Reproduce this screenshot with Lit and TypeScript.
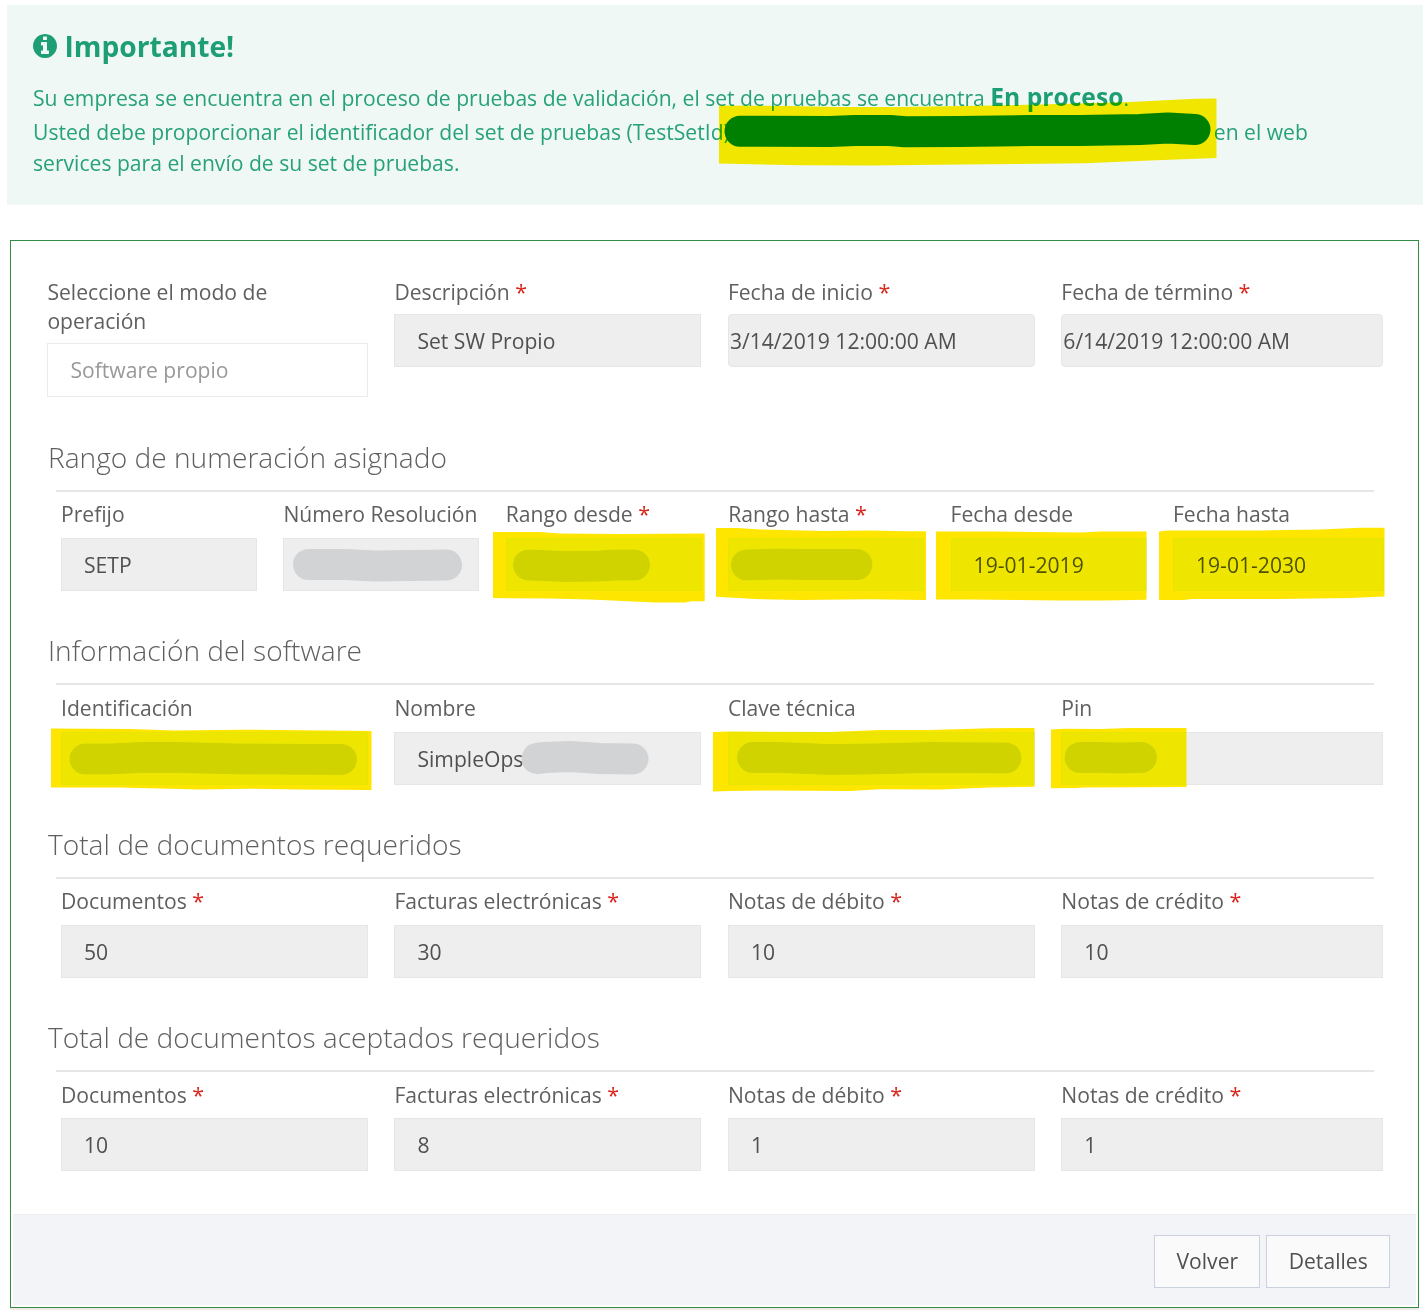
import { LitElement, html, css, svg, nothing } from "lit";
import { customElement, property } from "lit/decorators.js";

interface Field {
  label: string;
  value?: string;
  required?: boolean;
  variant?: "plain" | "date" | "select";
}

interface Section {
  title: string;
  fields: Field[];
}

const GENERAL: Field[] = [
  { label: "Seleccione el modo de operación", value: "Software propio", variant: "select" },
  { label: "Descripción", value: "Set SW Propio", required: true },
  { label: "Fecha de inicio", value: "3/14/2019 12:00:00 AM", required: true, variant: "date" },
  { label: "Fecha de término", value: "6/14/2019 12:00:00 AM", required: true, variant: "date" },
];

const totals = (values: string[]): Field[] =>
  ["Documentos", "Facturas electrónicas", "Notas de débito", "Notas de crédito"].map(
    (label, i) => ({ label, value: values[i], required: true })
  );

const SECTIONS: Section[] = [
  {
    title: "Rango de numeración asignado",
    fields: [
      { label: "Prefijo", value: "SETP" },
      { label: "Número Resolución" },
      { label: "Rango desde", required: true },
      { label: "Rango hasta", required: true },
      { label: "Fecha desde", value: "19-01-2019" },
      { label: "Fecha hasta", value: "19-01-2030" },
    ],
  },
  {
    title: "Información del software",
    fields: [
      { label: "Identificación" },
      { label: "Nombre", value: "SimpleOps" },
      { label: "Clave técnica" },
      { label: "Pin" },
    ],
  },
  { title: "Total de documentos requeridos", fields: totals(["50", "30", "10", "10"]) },
  { title: "Total de documentos aceptados requeridos", fields: totals(["10", "8", "1", "1"]) },
];

/* Pen strokes that hide private values. */
const REDACTIONS = [
  "M308.500 564.500L345 564.500L375 566L446.500 565",
  "M528.500 565L565 566.500L600 566L615 565L634.500 565",
  "M746.500 565L780 564L800 564.500L857 564.500",
  "M85 759L110 759L140 757.500L180 757.500L240 759L341.500 759.500",
  "M537 758.500L545 757.500L570 756.500L600 758.500L633 759",
  "M752.500 757.500L780 757.500L830 759.500L870 759L930 757.500L1006 758",
  "M1080 757.500L1100 757.500L1120 758L1141.500 757.500",
];

/* Translucent highlighter areas. */
const HIGHLIGHTS = [
  "M719 105.500L790 106L838 107L900 107L960 106L1040 104.500L1130 102L1195 98.800L1216.500 98.500V158L1150 160.500L1085 163.200L960 164.500L870 165.500L800 165.200L719 163.500Z",
  "M493 532L540 532L560 533.500L620 534L704.700 533.500V601.200L692 601.200L685 602.500L655 602.500L590 599.500L550 598.500L493 598Z",
  "M716 528L738 528L760 529.500L825 531L870 530.500L905 531.300L926 531.300V600L870 599.300L800 600L755 599L716 596.800Z",
  "M936 531.500L995 531.500L1080 532.500L1100 531.500L1146.500 531.500V599.800L1105 600.500L1060 600.500L970 599.500L936 599.500Z",
  "M1159 531.500L1168 530.500L1260 530.500L1320 529.500L1360 527.700L1384.500 527.700V596.500L1350 598L1280 599L1192 599L1184 600L1159 600Z",
  "M51 728.500L130 729L175 730.500L240 729.700L371.500 731V790L300 789.500L250 788.700L200 789.500L160 788.500L120 787.500L51 787.500Z",
  "M713 732L730 731.500L830 732L880 730L930 730L990 728.200L1034.500 728V786.800L990 787.500L940 789.500L880 789.300L850 791L770 790.500L730 791L713 791.500Z",
  "M1051 729.500L1065 728.800L1100 729L1130 728L1186.500 728V787L1085 787.500L1075 788L1051 788.200Z",
];

const BASE = css`
  :host {
    font-family: "Open Sans", "Noto Sans", sans-serif;
    color: #5b5b5b;
  }
`;

@customElement("form-field")
export class FormField extends LitElement {
  @property({ attribute: false }) field!: Field;

  static styles = [
    BASE,
    css`
      :host {
        display: block;
        min-width: 0;
      }
      .label {
        font-size: 21.120px;
        line-height: 29.300px;
        padding-bottom: var(--label-gap, 8.400px);
        color: #5f5f5f;
        white-space: nowrap;
      }
      .label.select {
        white-space: normal;
      }
      .required {
        color: #d8261c;
        font-size: 21.500px;
        line-height: 20px;
      }
      .control {
        box-sizing: border-box;
        height: 53px;
        border: 1px solid #e6e6e6;
        background: #eee;
        color: #505050;
        font-size: 21.120px;
        line-height: 51px;
        padding: 0 22px;
        white-space: nowrap;
      }
      .control.date {
        padding: 0 1px;
        border-radius: 4px;
      }
      .control.select {
        height: 54px;
        background: #fff;
        color: #999;
        border-color: #e9ebee;
      }
    `,
  ];

  render() {
    const f = this.field;
    const variant = f.variant ?? "plain";
    return html`
      <div class="label ${variant}">
        ${f.label}${f.required ? html` <span class="required">*</span>` : nothing}
      </div>
      <div class="control ${variant}">${f.value ?? nothing}</div>
    `;
  }
}

@customElement("app-root")
export class AppRoot extends LitElement {
  static styles = [
    BASE,
    css`
      :host {
        display: block;
        position: relative;
        isolation: isolate;
        box-sizing: border-box;
        width: 1423px;
        height: 1313px;
        overflow: hidden;
        background: #fff;
        padding-top: 5px;
      }
      .notice {
        box-sizing: border-box;
        height: 200px;
        margin-left: 7px;
        padding: 22px 26px;
        background: #f0f8f6;
        color: #27a17a;
      }
      .notice-title {
        display: flex;
        align-items: center;
        gap: 7.500px;
        margin: 0;
        height: 38px;
        font-size: 28.160px;
        font-weight: 700;
        line-height: 38px;
        color: #1d9e74;
      }
      .info {
        width: 24px;
        height: 24px;
        fill: currentColor;
      }
      .notice-text {
        margin: 14px 0 0;
        font-size: 21.120px;
        line-height: 30.500px;
        white-space: nowrap;
      }
      .line {
        display: block;
      }
      .line.first {
        line-height: 37.500px;
        padding-bottom: 0.800px;
      }
      .state {
        font-size: 24.640px;
        line-height: 30px;
        font-weight: 700;
        color: #1d9e74;
      }
      .secret {
        display: inline-block;
        width: 484px;
      }
      .panel {
        box-sizing: border-box;
        height: 1068px;
        width: 1409px;
        margin: 35px 0 0 10px;
        border: 1px solid #338d45;
        display: flex;
        flex-direction: column;
        box-shadow: 0 2px 1px #efeae9;
      }
      .general {
        box-sizing: border-box;
        padding: 35.500px 0 0 50px;
        height: 189.200px;
      }
      .grid {
        display: grid;
        align-items: start;
      }
      .grid.four {
        grid-template-columns: repeat(3, 307px) 321.300px;
        column-gap: 26.450px;
      }
      .grid.six {
        grid-template-columns: repeat(5, 196px) 211px;
        column-gap: 26.400px;
      }
      .wide {
        margin-left: -13.600px;
      }
      .section {
        height: 193.400px;
      }
      .heading {
        margin: 0;
        padding: 8.600px 0 15px 37px;
        font-size: 28.100px;
        line-height: 36px;
        font-weight: 300;
        color: #5f5f5f;
      }
      .rule {
        height: 2px;
        margin: 0 44px 7.700px 45px;
        background: #e6e6e6;
      }
      .fields {
        --label-gap: 9.400px;
        padding-left: 50px;
      }
      .footer {
        box-sizing: border-box;
        margin: auto 2px 2px;
        height: 91px;
        border-top: 1px solid #eceef0;
        background: #f3f4f7;
        display: flex;
        justify-content: flex-end;
        gap: 6px;
        padding: 20px 26px 0 0;
      }
      .button {
        box-sizing: border-box;
        height: 53px;
        padding: 0 21.300px 2px;
        border: 1px solid #c9d2de;
        background: #fafafa;
        color: #505050;
        font: 21.120px/49px "Open Sans", "Noto Sans", sans-serif;
      }
      .ink {
        position: absolute;
        left: 0;
        top: 0;
        width: 1423px;
        height: 1313px;
        pointer-events: none;
      }
      .pen {
        fill: none;
        stroke: #d1d3d4;
        stroke-width: 31px;
        stroke-linecap: round;
        stroke-linejoin: round;
      }
      .pen.green {
        stroke: #008000;
      }
      .marker {
        mix-blend-mode: darken;
        fill: #ffe600;
      }
    `,
  ];

  private section(s: Section) {
    const columns = s.fields.length === 6 ? "six" : "four";
    return html`
      <section class="section">
        <h2 class="heading">${s.title}</h2>
        <div class="rule"></div>
        <div class="fields grid ${columns}">
          ${s.fields.map((f) => html`<form-field .field=${f}></form-field>`)}
        </div>
      </section>
    `;
  }

  render() {
    return html`
      <div class="notice">
        <h1 class="notice-title">
          <svg class="info" viewBox="0 128 1536 1536">
            <path
              d="M1024 1376v-160q0-14-9-23t-23-9h-96v-512q0-14-9-23t-23-9h-320q-14 0-23 9t-9 23v160q0 14 9 23t23 9h96v320h-96q-14 0-23 9t-9 23v160q0 14 9 23t23 9h448q14 0 23-9t9-23zm-128-896v-160q0-14-9-23t-23-9h-192q-14 0-23 9t-9 23v160q0 14 9 23t23 9h192q14 0 23-9t9-23zm640 416q0 209-103 385.500t-279.500 279.500-385.500 103-385.500-103-279.500-279.500-103-385.500 103-385.500 279.500-279.500 385.500-103 385.500 103 279.500 279.500 103 385.500z"
            />
          </svg>
          <span>Importante!</span>
        </h1>
        <p class="notice-text">
          <span class="line first"
            >Su empresa se encuentra en el proceso de pruebas de validación, el set de pruebas se
            encuentra <b class="state">En proceso</b>.</span
          >
          <span class="line"
            >Usted debe proporcionar el identificador del set de pruebas (TestSetId)<span
              class="secret"
            ></span
            >en el web</span
          >
          <span class="line">services para el envío de su set de pruebas.</span>
        </p>
      </div>

      <div class="panel">
        <div class="general">
          <div class="grid four">
            ${GENERAL.map(
              (f, i) => html`<form-field class=${i === 0 ? "wide" : ""} .field=${f}></form-field>`
            )}
          </div>
        </div>
        ${SECTIONS.map((s) => this.section(s))}
        <div class="footer">
          <button class="button">Volver</button>
          <button class="button">Detalles</button>
        </div>
      </div>

      <svg class="ink" viewBox="0 0 1423 1313">
        ${REDACTIONS.map((d) => svg`<path class="pen" d=${d} />`)}
      </svg>
      <svg class="ink marker" viewBox="0 0 1423 1313">
        ${HIGHLIGHTS.map((d) => svg`<path d=${d} />`)}
      </svg>
      <svg class="ink" viewBox="0 0 1423 1313">
        <path
          class="pen green"
          d="M740 131.300L830 131.500L855 130.500L890 130.500L905 131.800L960 131.500L1030 130.500L1080 130.500L1140 129.500L1168 128L1195 129.500"
        />
      </svg>
    `;
  }
}
